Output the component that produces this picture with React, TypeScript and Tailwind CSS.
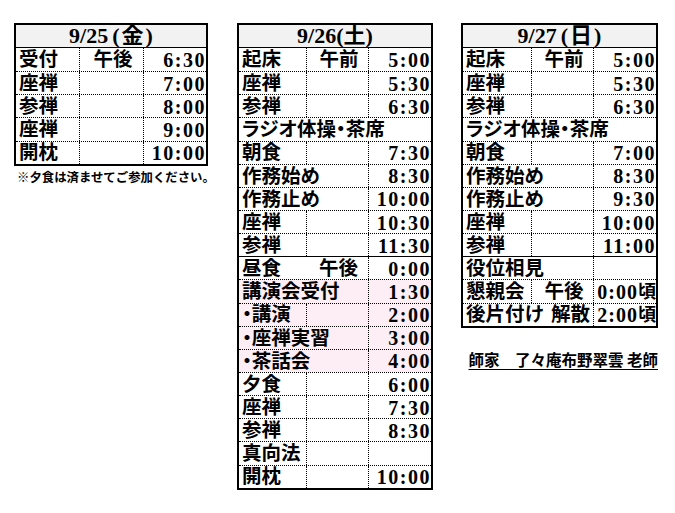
import clsx from "clsx";

type Row = {
  a: string;
  b?: string;
  c?: string;
  // "ab": first cell runs over the second column, "abc": over all three
  span?: "ab" | "abc";
  noDiv1?: boolean;
  pink?: boolean;
  solid?: boolean;
  suffix?: string;
  right?: string;
};

const day1: Row[] = [
  { a: "受付", b: "午後", c: "6:30" },
  { a: "座禅", c: "7:00" },
  { a: "参禅", c: "8:00" },
  { a: "座禅", c: "9:00" },
  { a: "開枕", c: "10:00" },
];

const day2: Row[] = [
  { a: "起床", b: "午前", c: "5:00" },
  { a: "座禅", c: "5:30" },
  { a: "参禅", c: "6:30" },
  { a: "ラジオ体操・茶席", span: "abc" },
  { a: "朝食", c: "7:30" },
  { a: "作務始め", c: "8:30", span: "ab" },
  { a: "作務止め", c: "10:00", span: "ab" },
  { a: "座禅", c: "10:30" },
  { a: "参禅", c: "11:30" },
  { a: "昼食", b: "午後", c: "0:00", solid: true, noDiv1: true },
  { a: "講演会受付", c: "1:30", span: "ab", pink: true },
  { a: "・講演", c: "2:00", pink: true },
  { a: "・座禅実習", c: "3:00", span: "ab", pink: true },
  { a: "・茶話会", c: "4:00", span: "ab", pink: true },
  { a: "夕食", c: "6:00" },
  { a: "座禅", c: "7:30" },
  { a: "参禅", c: "8:30" },
  { a: "真向法" },
  { a: "開枕", c: "10:00" },
];

const day3: Row[] = [
  { a: "起床", b: "午前", c: "5:00" },
  { a: "座禅", c: "5:30" },
  { a: "参禅", c: "6:30" },
  { a: "ラジオ体操・茶席", span: "abc" },
  { a: "朝食", c: "7:00" },
  { a: "作務始め", c: "8:30", span: "ab" },
  { a: "作務止め", c: "9:30", span: "ab" },
  { a: "座禅", c: "10:00" },
  { a: "参禅", c: "11:00" },
  { a: "役位相見", span: "ab", solid: true },
  { a: "懇親会", b: "午後", c: "0:00", suffix: "頃" },
  { a: "後片付け", right: "解散", c: "2:00", suffix: "頃", span: "ab" },
];

const label =
  "flex items-center pl-[3px] pt-[1px] text-[19.5px] font-bold leading-none whitespace-nowrap [font-feature-settings:'palt']";
const dot = "border-l border-dotted border-black";

function Time({ r }: { r: Row }) {
  if (!r.c) return null;
  if (r.suffix) {
    return (
      <span className="flex items-center">
        <span className="text-[20px] font-bold tracking-[1px]">{r.c}</span>
        <span className="text-[18px] font-bold">{r.suffix}</span>
      </span>
    );
  }
  return <span className="text-[20px] font-bold tracking-[1.5px]">{r.c}</span>;
}

function Table({ title, rows, cols }: { title: React.ReactNode; rows: Row[]; cols: string }) {
  return (
    <div className="border-2 border-black">
      <div className="flex h-[23px] items-center justify-center border-b border-black bg-[#f2f2f2] text-[22px] font-bold leading-none">
        {title}
      </div>
      {rows.map((r, i) => (
        <div
          key={i}
          className={clsx(
            "grid h-[23.15px]",
            cols,
            i > 0 && (r.solid ? "border-t border-solid border-black" : "border-t border-dotted border-black"),
            r.pink && "bg-[#fdedf5]"
          )}
        >
          {r.span === "abc" ? (
            <div className={clsx(label, "col-span-3")}>{r.a}</div>
          ) : (
            <>
              {r.span === "ab" ? (
                <div className={clsx(label, "col-span-2 justify-between pr-[3px]")}>
                  <span>{r.a}</span>
                  {r.right && <span>{r.right}</span>}
                </div>
              ) : (
                <>
                  <div className={label}>{r.a}</div>
                  <div className={clsx(label, "justify-center pl-0", !r.noDiv1 && dot)}>{r.b}</div>
                </>
              )}
              <div className={clsx("flex items-center justify-end pt-[1px] leading-none", dot)}>
                <Time r={r} />
              </div>
            </>
          )}
        </div>
      ))}
    </div>
  );
}

export default function App() {
  return (
    <div className="h-[513px] w-[675px] bg-white pt-[23px] font-['Liberation_Serif','Noto_Sans_CJK_JP',serif] text-black">
      <div className="flex items-start pl-[14px]">
        <div className="w-[194px]">
          <Table
            title={
              <>
                9/25<span className="ml-[4px] mr-[2px]">(</span>金<span className="ml-[2px]">)</span>
              </>
            }
            rows={day1}
            cols="grid-cols-[63px_64px_63px]"
          />
          <p className="mt-[5px] whitespace-nowrap pl-[3px] font-['Noto_Sans_CJK_JP',sans-serif] text-[12.4px] font-bold leading-none">
            ※夕食は済ませてご参加ください。
          </p>
        </div>
        <div className="ml-[29px] w-[196px]">
          <Table title="9/26(土)" rows={day2} cols="grid-cols-[67px_62px_63px]" />
        </div>
        <div className="ml-[28px] w-[197px]">
          <Table
            title={
              <>
                9/27<span className="ml-[4px] mr-[2px]">(</span>日<span className="ml-[2px]">)</span>
              </>
            }
            rows={day3}
            cols="grid-cols-[68px_62px_63px]"
          />
          <p className="mt-[24px] whitespace-nowrap text-right font-['Noto_Sans_CJK_JP',sans-serif] text-[15.5px] font-bold leading-none underline underline-offset-[3px]">
            師家　了々庵布野翠雲 老師
          </p>
        </div>
      </div>
    </div>
  );
}
